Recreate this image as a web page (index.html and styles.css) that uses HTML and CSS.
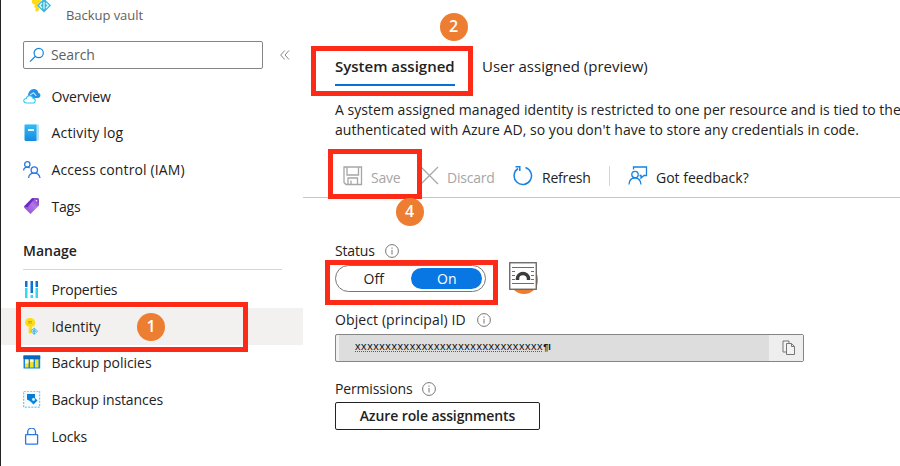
FILE: index.html
```html
<!DOCTYPE html>
<html lang="en">
<head>
<meta charset="utf-8">
<title>Backup vault - Identity</title>
<link rel="stylesheet" href="styles.css">
</head>
<body>
<div class="page">
  <aside class="sidebar">
    <header class="vault">
      <svg class="vault-icon" width="24" height="16" viewBox="0 0 24 16"><path d="M2 0H11L9 10 7 12 5 10 6 8 4 7 5 5 2 3Z" fill="#ffd91a"/><path d="M14-1 21.200 5.500 14 12.700 6.800 5.500Z" fill="#fff"/><path d="M14-1.500 21 5.500 14 12.500 7 5.500Z" fill="#38b8dc"/><path d="M12 3 9.700 5.500 12 8M16 3 18.300 5.500 16 8M14 2V9" stroke="#e8faff" stroke-width="1.200" fill="none"/></svg>
      <span class="vault-type">Backup vault</span>
    </header>
    <div class="search-row">
      <div class="search">
        <svg width="16" height="16" viewBox="0 0 16 16" fill="none" stroke="#1683d8" stroke-width="1.200"><circle cx="9.700" cy="6" r="4.600"/><path d="M6.400 9.300 1 14.600"/></svg>
        <span>Search</span>
      </div>
      <svg class="collapse" width="10" height="10" viewBox="0 0 10 10" fill="none" stroke="#858585"><path d="M4.700.5.700 5l4 4.500M9 .5 5 5l4 4.500"/></svg>
    </div>
    <nav class="nav nav-top">
      <a class="item"><svg width="18" height="18" viewBox="0 0 18 18"><path d="M5 8C5 4 8 .7 11.300 1c2.500.3 3.900 2 4.100 4 1.300.2 2 1.200 2 2.400 0 1.600-1.100 2.500-2.600 2.500H11z" fill="#2590e8"/><path d="M7 7 10.500 4.800l2.800 3" fill="none" stroke="#b9e2ff" stroke-width="1.200"/><path d="M3.700 15c-3.800 0-4-4.300-.4-4.500.5-3.500 5.600-3.700 6.400-.4 3.300.2 3.400 4.900 0 4.900z" fill="#fff" stroke="#35c8ed" stroke-width="1.100"/></svg><span class="ls-overview">Overview</span></a>
      <a class="item"><svg width="18" height="18" viewBox="0 0 18 18"><defs><linearGradient id="book" x2="0" y2="1"><stop stop-color="#35bcf3"/><stop offset="1" stop-color="#128ae2"/></linearGradient></defs><rect x="3" y=".5" width="13" height="16" rx="1" fill="#b5dff6"/><path d="M2 .5H13.500V17H3Q1.500 17 1.500 15.500V1Q1.500.5 2 .5Z" fill="url(#book)"/><rect x="5" y="5" width="6" height="2" fill="#e5f7ff"/></svg><span class="ls-activity">Activity log</span></a>
      <a class="item"><svg width="18" height="18" viewBox="0 0 18 18" fill="none" stroke="#2878e8" stroke-width="1.300"><circle cx="4.300" cy="3.400" r="2.700"/><path d="M.6 9.500C.8 7.500 2.300 6.200 4.200 6.200c1 0 1.800.3 2.500.9"/><circle cx="11.300" cy="9" r="3.200"/><path d="M5.600 17c.3-3 2.800-4.800 5.700-4.800S16.500 14 17 17"/></svg><span class="ls-access">Access control (IAM)</span></a>
      <a class="item"><svg width="18" height="18" viewBox="0 0 18 18"><defs><linearGradient id="tag" x1="0" x2="1" y1="1" y2="0"><stop stop-color="#8749d1"/><stop offset=".6" stop-color="#b078e6"/><stop offset="1" stop-color="#7632bd"/></linearGradient></defs><path d="M9 .3 14.500 0Q16 .2 16 2V7.500L7.500 16 1.500 10Q.7 9.300 1.200 8.300Z" fill="url(#tag)"/><path d="M2 7.500 9 .3 12 .2 4.500 9.200 1.300 9Z" fill="#6d29c4"/><circle cx="13.500" cy="2.800" r=".8" fill="#f5eaff"/></svg><span class="ls-tags">Tags</span></a>
    </nav>
    <h2 class="group"><span>Manage</span></h2>
    <nav class="nav">
      <a class="item"><svg width="18" height="18" viewBox="0 0 18 18"><path d="M2 0H4.500V6H2zM7.500 0H10V12H7.500zM12.500 0H15V6H12.500z" fill="#0c72d6"/><path d="M2 7H4.500V17H2zM12.500 7H15V17H12.500zM7.500 14H10V17H7.500z" fill="#35d6f2"/></svg><span class="ls-properties">Properties</span></a>
      <a class="item active"><svg width="18" height="18" viewBox="0 0 18 18"><path d="M7 0Q11.800 0 12.200 4.800 12.200 7.500 9 9V14L7 16 5 14 6.300 12.700 5 11.400 6.200 10V9Q2 7.500 2 4.500 2.200.2 7 0Z" fill="#fbdc15"/><path d="M5 3.500H9M5 5H9" stroke="#d5aa06"/><path d="M11.200 9.500 15.100 13.200 11.200 17 7.300 13.200Z" fill="#62bad6"/><path d="M10.500 11.500 8.900 13.200 10.500 15M12 11.500l1.600 1.700L12 15" fill="none" stroke="#d9f7ff" stroke-width=".8"/></svg><span class="ls-identity">Identity</span></a>
      <a class="item"><svg width="18" height="18" viewBox="0 0 18 18"><path d="M.5 1.500H17.200V14.500H.5z" fill="#1585d8"/><path d="M.5 1.500H17.200V5H.5z" fill="#0767be"/><path d="M2 5.500H5.500V13.500H2zM7 5.500H10.500V13.500H7zM12 5.500H15.500V13.500H12z" fill="#eee129"/><path d="M2 5.500H5.500V9.500H2zM7 5.500H10.500V8H7z" fill="#faf3d4"/></svg><span class="ls-policies">Backup policies</span></a>
      <a class="item"><svg width="18" height="18" viewBox="0 0 18 18"><rect x=".7" y=".2" width="16" height="16" fill="#f5fbff" stroke="#62b7eb" stroke-dasharray="2 1.200"/><path d="M4 3H12V7L9 10.500H8L4 8.500z" fill="#087bd5"/><path d="M10.500 5.500 14.500 9.500 10.500 13.500 6.500 9.500z" fill="#0985df"/><circle cx="10.500" cy="8.500" r="1.400" fill="#e8f7ff"/></svg><span class="ls-instances">Backup instances</span></a>
      <a class="item"><svg width="18" height="18" viewBox="0 0 18 18" fill="none" stroke="#2878e8" stroke-width="1.300"><rect x="2.600" y="6.700" width="12" height="9.500" rx=".5"/><path d="M4.700 6.500V4a3.900 3.900 0 0 1 7.800 0V6.500"/></svg><span class="ls-locks">Locks</span></a>
    </nav>
  </aside>
  <main class="content">
    <div class="tabs"><span class="tab selected"><span>System assigned</span></span><span class="tab"><span class="ls-user">User assigned (preview)</span></span></div>
    <p class="description"><span class="line1">A system assigned managed identity is restricted to one per resource and is tied to the</span><br><span class="line2">authenticated with Azure AD, so you don't have to store any credentials in code.</span></p>
    <div class="toolbar">
      <div class="command disabled save"><svg width="20" height="20" viewBox="0 0 20 20" fill="none" stroke="#a6a6a6" stroke-width="1.300"><path d="M1 1H18.500V18.500H3L1 16.500ZM4 1V9H15.500V1M5 18V12H14.500V18M8 18V14.500"/></svg><span>Save</span></div>
      <div class="command disabled discard"><svg width="20" height="20" viewBox="0 0 20 20" fill="none" stroke="#a6a6a6" stroke-width="1.200"><path d="M1 1 18 18M18 1 1 18"/></svg><span>Discard</span></div>
      <div class="command refresh"><svg width="20" height="20" viewBox="0 0 20 20" fill="none" stroke="#1683df" stroke-width="1.500"><path d="M12.500 1.500A8.700 8.700 0 1 1 5 2.500M2.500.8H6.800V5"/></svg><span>Refresh</span></div>
      <i class="divider"></i>
      <div class="command feedback"><svg width="20" height="20" viewBox="0 0 20 20" fill="none" stroke="#1683df" stroke-width="1.300"><path d="M5.500 3.500V1H18.500V9.500H16L13 12V9.500H11.500"/><circle cx="7" cy="8.500" r="3.200"/><path d="M1 18.500C1.200 14.500 3.400 12 7 12s5.600 2.500 6 6.500"/></svg><span>Got feedback?</span></div>
    </div>
    <section class="form">
      <div class="label"><span class="ls-status">Status</span><svg class="info" width="14" height="14" viewBox="0 0 14 14"><circle cx="7" cy="7" r="6.400"/><path d="M7 6V10.500M7 3.500V4.800"/></svg></div>
      <div class="toggle"><span class="off">Off</span><span class="on">On</span></div>
      <div class="label object-label"><span class="ls-object">Object (principal) ID</span><svg class="info" width="14" height="14" viewBox="0 0 14 14"><circle cx="7" cy="7" r="6.400"/><path d="M7 6V10.500M7 3.500V4.800"/></svg></div>
      <div class="id-field"><span class="id-value"><span class="misspelled">xxxxxxxxxxxxxxxxxxxxxxxxxxxxxxx</span><b>¶I</b></span><span class="copy"><svg width="14" height="16" viewBox="0 0 14 16" fill="#f3f3f3" stroke="#777"><path d="M1 1H7V12H1z"/><path d="M4.500 3.500H9.500L12.500 6.500V14.500H4.500zM9.500 3.500V6.500H12.500"/></svg></span></div>
      <div class="label permission-label"><span class="ls-permissions">Permissions</span><svg class="info" width="14" height="14" viewBox="0 0 14 14"><circle cx="7" cy="7" r="6.400"/><path d="M7 6V10.500M7 3.500V4.800"/></svg></div>
      <button class="roles"><span>Azure role assignments</span></button>
    </section>
  </main>
  <div class="highlight identity-highlight"></div>
  <div class="highlight tab-highlight"></div>
  <div class="highlight save-highlight"></div>
  <div class="highlight status-highlight"></div>
  <span class="step step-one">1</span><span class="step step-two">2</span><span class="step step-four">4</span><span class="step step-three"></span>
  <svg class="layout-button" width="28" height="28" viewBox="0 0 28 28"><rect x=".75" y=".75" width="26.500" height="26.500" fill="#fff" stroke="#606060" stroke-width="1.300"/><path d="M3 5.500H25M3 9.500H6M22 9.500H25M3 13.500H6M22 13.500H25M3 17.500H6M22 17.500H25M3 21.500H25" stroke="#1687c9" stroke-width="1.100"/><path d="M8.500 18V16.500a5.500 5 0 0 1 11 0V18" fill="none" stroke="#3c3c3c" stroke-width="3.500"/></svg>
</div>
</body>
</html>
```
FILE: styles.css
```css
* { box-sizing: border-box; }
body { margin: 0; background: #fff; color: #222; font: 14px/20px "Open Sans", "Noto Sans", sans-serif; }
.page { position: relative; display: flex; width: 900px; height: 466px; overflow: hidden; border-left: 1px solid #222; }
span { white-space: nowrap; }
svg { flex: none; }
.sidebar { width: 302px; flex: none; }
.vault { display: flex; height: 41px; padding-left: 29px; }
.vault-type { margin: 5px 0 0 12px; font-size: 13px; letter-spacing: -.05px; color: #616161; }
.search-row { display: flex; align-items: center; height: 28px; padding-left: 22px; }
.search { display: flex; align-items: center; gap: 6px; width: 240px; height: 28px; padding-left: 5px; border: 1px solid #858585; border-radius: 2px; color: #606060; letter-spacing: -.1px; }
.collapse { margin-left: 17px; }
.nav-top { padding-top: 9.500px; }
.item { display: flex; align-items: center; height: 36.600px; padding-left: 22px; gap: 10.500px; letter-spacing: -.2px; }
.ls-activity { letter-spacing: .17px; }
.ls-access { letter-spacing: .12px; }
.ls-identity { letter-spacing: -.05px; }
.ls-policies { letter-spacing: -.03px; }
.ls-instances { letter-spacing: -.1px; }
.active { background: #f2f1f0; }
.group { display: flex; height: 29px; margin: 16.500px 21px 1.500px 22px; padding-top: 0; border-bottom: 1px solid #d6d6d6; font-size: 14px; line-height: 20px; font-weight: 600; letter-spacing: 0; }
.content { width: 597px; flex: none; }
.tabs { display: flex; gap: 27px; height: 86px; padding: 56px 0 0 32px; font-size: 15px; }
.tab { height: 30px; }
.selected { width: 120px; border-bottom: 2px solid #0870da; font-weight: 600; letter-spacing: 0; }
.ls-user { letter-spacing: 0; }
.description { height: 60px; margin: 0; padding: 14px 0 0 32px; line-height: 19.500px; white-space: nowrap; }
.line1 { letter-spacing: .035px; }
.line2 { letter-spacing: .05px; }
.toolbar { display: flex; align-items: center; height: 52px; padding: 12px 0 0 40px; border-bottom: 1px solid #c6c6c6; }
.command { display: flex; align-items: center; gap: 8px; letter-spacing: -.2px; }
.command svg { margin-top: -3px; }
.disabled { color: #a6a6a6; }
.save { width: 77px; }
.discard { width: 93px; gap: 7px; }
.refresh { width: 96px; gap: 9px; }
.divider { width: 1px; height: 20px; margin: -3px 18px 0 0; background: #d6d6d6; }
.feedback { letter-spacing: 0; }
.form { padding: 43px 0 0 32px; }
.label { display: flex; align-items: center; gap: 10px; height: 20px; letter-spacing: -.15px; }
.ls-object { letter-spacing: .1px; }
.object-label { gap: 11px; }
.info { fill: none; stroke: #777; stroke-width: 1px; }
.toggle { display: flex; width: 151px; height: 27px; margin-top: 4px; padding: 2px 3px 2px 0; border: 1px solid #777; border-radius: 14px; line-height: 21px; letter-spacing: 0; }
.off { width: 76px; text-align: center; }
.on { width: 71px; border-radius: 11px; background: #0877e4; color: #fff; text-align: center; }
.object-label { margin-top: 18px; }
.id-field { display: flex; justify-content: space-between; width: 469px; height: 28px; margin-top: 4px; border: 1px solid #858585; border-radius: 2px; background: #ddd; box-shadow: inset 3px 0 #f2f2f2; }
.id-value { padding: 2px 0 0 19px; color: #111; font: 11px/18px "Liberation Sans", sans-serif; }
.misspelled { letter-spacing: .57px; text-decoration: underline dotted #c92d2d 1px; text-underline-offset: 1px; }
.id-value b { font-size: 9px; }
.copy { display: flex; align-items: center; justify-content: center; width: 34px; padding-left: 5px; background: #eee; }
.permission-label { margin-top: 17px; }
.roles { display: flex; align-items: center; justify-content: center; width: 205px; height: 28px; margin-top: 3px; padding: 0; border: 1px solid #222; border-radius: 2px; background: #fff; color: #222; font: 600 14px/20px "Open Sans", sans-serif; letter-spacing: -.1px; }
.highlight { position: absolute; border: 5px solid #fb2b18; }
.identity-highlight { left: 15px; top: 302px; width: 232px; height: 50px; }
.tab-highlight { left: 310px; top: 46px; width: 162px; height: 50px; }
.save-highlight { left: 327px; top: 149px; width: 94px; height: 50px; }
.status-highlight { left: 324px; top: 260px; width: 173px; height: 45px; }
.step { position: absolute; width: 28px; height: 28px; border-radius: 50%; background: #ed7d31; color: #fff; font-size: 16px; line-height: 27px; font-weight: 600; text-align: center; }
.step-one { left: 136px; top: 313px; }
.step-two { left: 438.500px; top: 13px; }
.step-four { left: 394.500px; top: 198px; }
.step-three { left: 508.500px; top: 266px; }
.layout-button { position: absolute; left: 508px; top: 262px; }
```
